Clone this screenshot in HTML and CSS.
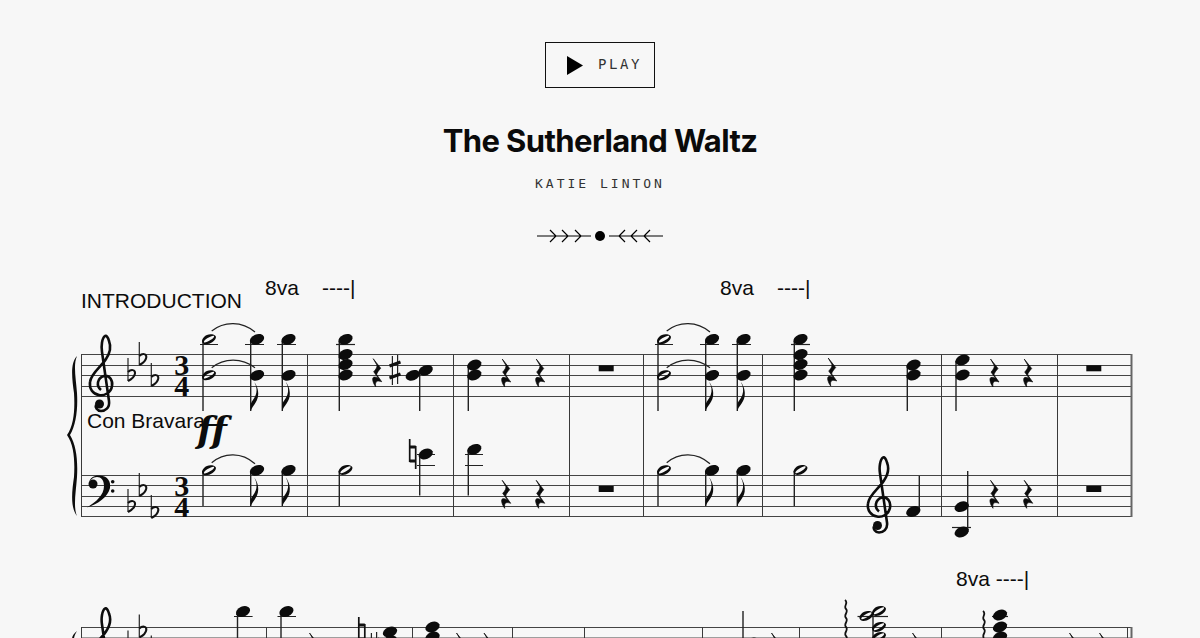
FILE: index.html
```html
<!DOCTYPE html>
<html lang="en">
<head>
    <meta charset="UTF-8">
    <meta name="viewport" content="width=device-width, initial-scale=1.0">
    <title>The Sutherland Waltz</title>
    <link rel="stylesheet" href="styles.css">
</head>
<body>
    <div class="page">
        <button class="play-btn" type="button">
            <svg class="play-icon" width="16" height="19" viewBox="0 0 16 19"><path d="M0 0L16 9.5L0 19Z"/></svg>
            <span>PLAY</span>
        </button>

        <h1 class="title">The Sutherland Waltz</h1>
        <p class="author">KATIE LINTON</p>

        <svg class="ornament" width="126" height="14" viewBox="0 0 126 14">
            <path d="M0 7H54M13 1L19 7L13 13M25 1L31 7L25 13M38 1L44 7L38 13"/>
            <circle cx="63" cy="7" r="5"/>
            <path d="M72 7H126M88 1L82 7L88 13M100 1L94 7L100 13M113 1L107 7L113 13"/>
        </svg>

        <svg class="score" width="1200" height="378" viewBox="0 260 1200 378">
            <defs>
                <ellipse id="head" rx="7.4" ry="5" transform="rotate(-22)"/>
                <path id="half" fill-rule="evenodd" d="M-6.8 2.6C-7.8 -0.4 -3.6 -5 1.6 -5C5.6 -5 7.6 -3.2 6.8 -1.2C5.8 2 1.6 5 -3 5C-5 5 -6.4 3.8 -6.8 2.6ZM-5 3C-4.4 3.8 -1.4 2.6 1.4 0.8C4.2 -1 5.6 -2.6 5 -3.4C4.4 -4.2 1.4 -3 -1.4 -1.2C-4.2 0.6 -5.6 2.2 -5 3Z"/>
                <path id="rest" class="rest-shape" d="M-3.5 -14L4 -4.5C2 -2 0 0 0 2L5 9C1 7.5 -2 8 -1 14C-4 10 -5 5 -3 4.5C-1 4 1 5 2 6L-3 -1C-1 -3 1 -6 0 -8Z"/>
                <path id="flag" d="M0 0C1 -5 8 -9 7.5 -18C7.5 -23 5 -27 3.5 -29C6 -25 6.5 -20 5 -16C3 -11 0 -9 0 -6Z"/>
                <g id="flat">
                    <path class="thin" d="M0 -17V6"/>
                    <path class="bowl" d="M0 -3C3 -6 7.5 -5.5 7 -1.5C6.5 1.5 3 4.5 0 6"/>
                </g>
                <g id="sharp">
                    <path class="thin" d="M-2.6 -14V15M2.6 -15V14"/>
                    <path class="thick" d="M-5.5 -4L5.5 -8M-5.5 8L5.5 4"/>
                </g>
                <g id="natural">
                    <path class="natural-line" d="M-3 -15V8M3 -8V15"/>
                    <path class="thick" d="M-3 -7L3 -7M-3 7L3 7"/>
                </g>
                <g id="treble-clef">
                    <path class="clef-line" d="M101 389C96 385 97 377 104 375C110 374 113 380 112 385C111 392 104 395 99 394C93 393 89 388 90 381C91 372 101 366 106 358C110 352 111 345 109 340C108 336 106 334 105 335C102 337 101 345 102 351L109 400C110 407 105 410 101 410C97 410 95 406 96 404"/>
                    <circle cx="99.5" cy="403" r="4.5"/>
                </g>
                <g id="key-treble">
                    <use href="#flat" x="128" y="374"/>
                    <use href="#flat" x="139.3" y="358"/>
                    <use href="#flat" x="151.3" y="379"/>
                </g>
                <g id="phrase-treble">
                    <path class="ledger" d="M200 343.5H218M245 343.5H264M277 343.5H296"/>
                    <path class="stem" d="M203 340V410M250.7 340V410M282.3 340V410"/>
                    <use href="#half" x="209" y="338.3"/>
                    <use href="#half" x="209" y="374.3"/>
                    <use href="#head" x="257" y="338.3"/>
                    <use href="#head" x="257" y="374.3"/>
                    <use href="#head" x="288.5" y="338.3"/>
                    <use href="#head" x="288.5" y="374.3"/>
                    <use href="#flag" x="250.7" y="410"/>
                    <use href="#flag" x="282.3" y="410"/>
                    <path class="slur" d="M211.7 330C224 320 242 320 255 331"/>
                    <path class="slur" d="M211.7 366.7C224 356.5 242 356.5 255 366.7"/>
                </g>
                <g id="phrase-bass">
                    <path class="stem" d="M203 470V505M250.7 470V505M282.3 470V505"/>
                    <use href="#half" x="209" y="469.3"/>
                    <use href="#head" x="257" y="469.3"/>
                    <use href="#head" x="288.5" y="469.3"/>
                    <use href="#flag" x="250.7" y="505.5"/>
                    <use href="#flag" x="282.3" y="505.5"/>
                    <path class="slur" d="M211.7 461.7C224 451 242 451 255 462.7"/>
                </g>
                <g id="chord-big">
                    <path class="ledger" d="M336 343.5H355"/>
                    <path class="stem" d="M339.3 340V410"/>
                    <use href="#head" x="345.5" y="338.3"/>
                    <use href="#head" x="345.5" y="353.5"/>
                    <use href="#head" x="345.5" y="363.5"/>
                    <use href="#head" x="345.5" y="374"/>
                </g>
            </defs>

            <!-- staves, system 1 -->
            <path class="staff" d="M81 353.5H1132M81 364.5H1132M81 374.5H1132M81 385.5H1132M81 395.5H1132"/>
            <path class="staff" d="M81 474.5H1132M81 484.5H1132M81 495.5H1132M81 505.5H1132M81 515.5H1132"/>
            <path class="bar" d="M81.5 353.5V515.5M307.5 353.5V515.5M453.5 353.5V515.5M569.5 353.5V515.5M643.5 353.5V515.5M762.5 353.5V515.5M941.5 353.5V515.5M1057.5 353.5V515.5"/>
            <path class="bar-end" d="M1131.5 353V516"/>
            <path d="M77 355C70 362 72 378 74 392C75 408 74 424 67 434C74 444 75 460 74 476C72 490 70 506 77 515C73 506 76 490 77 476C78 458 76 444 70 434C76 424 78 408 77 392C76 378 73 364 77 355Z"/>

            <text class="label" x="81" y="307">INTRODUCTION</text>
            <text class="label" x="265" y="294">8va</text>
            <text class="label" x="322" y="294">----|</text>
            <text class="label" x="720" y="294">8va</text>
            <text class="label" x="777" y="294">----|</text>
            <text class="label" x="87" y="427">Con Bravara</text>
            <text class="dynamic" x="197" y="441">ff</text>

            <use href="#treble-clef"/>
            <use href="#key-treble"/>
            <text class="time" x="181.7" y="374">3</text>
            <text class="time" x="181.7" y="395">4</text>

            <path d="M89 482C90 476 95 474 100 474.5C108 475 111 481 110 487C108 496 98 503 87 506.5C96 501 104 494 104 485C104 479 101 476 97 476C93 476 90 479 89 482Z"/>
            <circle cx="93" cy="483" r="4.5"/>
            <circle cx="112.7" cy="480.7" r="1.8"/>
            <circle cx="112.7" cy="490" r="1.8"/>
            <use href="#flat" x="128" y="505"/>
            <use href="#flat" x="139.3" y="489"/>
            <use href="#flat" x="151.3" y="511"/>
            <text class="time" x="181.7" y="495">3</text>
            <text class="time" x="181.7" y="516">4</text>

            <!-- measures 1-4 -->
            <use href="#phrase-treble"/>
            <use href="#phrase-bass"/>
            <use href="#chord-big"/>
            <use href="#rest" x="376.7" y="371.7"/>
            <use href="#sharp" x="395" y="369"/>
            <path class="stem" d="M419.7 370V410"/>
            <use href="#head" x="412.7" y="374.3"/>
            <use href="#head" x="425.7" y="369.3"/>
            <path class="stem" d="M468.3 365V410"/>
            <use href="#head" x="474.3" y="364"/>
            <use href="#head" x="474.3" y="374"/>
            <use href="#rest" x="505.7" y="372"/>
            <use href="#rest" x="539.7" y="372"/>
            <rect x="598.7" y="364.3" width="15" height="6"/>

            <path class="stem" d="M339.3 470V505"/>
            <use href="#half" x="345.5" y="469"/>
            <use href="#natural" x="412.7" y="453"/>
            <path class="ledger" d="M417 453.5H435M417 464.5H435M465 453.5H483M465 464.5H483"/>
            <path class="stem" d="M419.7 454V494.5M468.3 449V494.5"/>
            <use href="#head" x="425.7" y="453"/>
            <use href="#head" x="474.3" y="448.3"/>
            <use href="#rest" x="505.7" y="493.3"/>
            <use href="#rest" x="539.7" y="493.3"/>
            <rect x="598.7" y="485" width="15" height="6"/>

            <!-- measures 5-8 -->
            <use href="#phrase-treble" x="455"/>
            <use href="#phrase-bass" x="455"/>
            <use href="#chord-big" x="455"/>
            <use href="#rest" x="831.7" y="371"/>
            <path class="stem" d="M907.3 365V410M956 360V410"/>
            <use href="#head" x="913.5" y="364"/>
            <use href="#head" x="913.5" y="374"/>
            <use href="#head" x="962.5" y="359"/>
            <use href="#head" x="962.5" y="374"/>
            <use href="#rest" x="994" y="372"/>
            <use href="#rest" x="1027.7" y="372"/>
            <rect x="1086.3" y="364.3" width="15" height="6"/>

            <path class="stem" d="M794.3 470V505"/>
            <use href="#half" x="800.5" y="469"/>
            <use href="#treble-clef" x="778" y="121.5"/>
            <path class="stem" d="M919.3 475V510M967.7 470V531"/>
            <use href="#head" x="913.3" y="510.5"/>
            <path class="ledger" d="M952 526.5H971"/>
            <use href="#head" x="961.7" y="505.7"/>
            <use href="#head" x="961.7" y="531"/>
            <use href="#rest" x="994" y="493.3"/>
            <use href="#rest" x="1027.7" y="493.3"/>
            <rect x="1086.3" y="485" width="15" height="6"/>

            <!-- system 2, cut off by the window -->
            <text class="label" x="956" y="584.5">8va ----|</text>
            <path class="staff" d="M81 626.5H1132M81 637H1132"/>
            <path class="bar" d="M81.5 626V638M266.5 626V638M412.5 626V638M512.5 626V638M584.5 626V638M702.5 626V638M799.5 626V638M941.5 626V638M1127.5 626V638"/>
            <path class="bar-end" d="M1131.5 626V638"/>
            <path d="M77 630C73 633 72 636 72 638H74C74 636 75 633 77 630Z"/>
            <use href="#treble-clef" y="272.5"/>
            <use href="#key-treble" y="272.5"/>

            <path class="ledger" d="M234 615.5H252.6M277.5 615.5H296"/>
            <path class="stem" d="M237.5 612V638M281 612V638M743 610V638"/>
            <use href="#head" x="243" y="610.5"/>
            <use href="#head" x="286.4" y="610.5"/>
            <use href="#rest" x="313" y="646"/>
            <use href="#natural" x="361.8" y="631"/>
            <use href="#sharp" x="374" y="646"/>
            <use href="#head" x="390" y="631"/>
            <use href="#head" x="390" y="640"/>
            <use href="#head" x="432.5" y="626"/>
            <use href="#head" x="432.5" y="636"/>
            <use href="#rest" x="460" y="646"/>
            <use href="#rest" x="487.5" y="646"/>
            <rect x="541" y="637" width="15" height="2"/>
            <use href="#rest" x="722" y="652"/>
            <use href="#head" x="752" y="642"/>
            <use href="#rest" x="775" y="646"/>

            <path class="wiggle" d="M845 599C849 602 843 605 846 608C849 611 843 614 846 617C849 620 843 623 846 626C849 629 843 632 846 635C848 637 846 638 846 639"/>
            <path class="ledger" d="M857.5 615.5H888"/>
            <path class="stem" d="M873 612V638"/>
            <use href="#half" x="866.4" y="615"/>
            <use href="#half" x="879" y="610"/>
            <use href="#half" x="879" y="626"/>
            <use href="#half" x="879" y="636"/>
            <use href="#rest" x="916" y="646"/>

            <path class="wiggle" d="M983 610C987 613 981 616 984 619C987 622 981 625 984 628C987 631 981 634 984 637"/>
            <path class="ledger" d="M992 615.5H1008"/>
            <use href="#head" x="1000" y="614"/>
            <use href="#head" x="1000" y="626"/>
            <use href="#head" x="1000" y="636"/>
            <use href="#rest" x="1073" y="646"/>
            <use href="#rest" x="1103" y="646"/>
        </svg>
    </div>
</body>
</html>
```

FILE: styles.css
```css
html, body {
    margin: 0;
    height: 100%;
    overflow: hidden;
}
body {
    background-color: #f7f7f7;
    color: #111;
}
.page {
    display: flex;
    flex-direction: column;
    align-items: center;
    padding-top: 42px;
}
.play-btn {
    display: flex;
    align-items: center;
    gap: 15px;
    width: 110px;
    height: 46px;
    padding: 0 0 0 21px;
    background: transparent;
    border: 1px solid #111;
    font-family: "DejaVu Sans Mono", monospace;
    font-size: 14px;
    line-height: 16px;
    letter-spacing: 2.6px;
    color: #333;
}
.play-btn span {
    margin-bottom: 2px;
}
.play-icon {
    fill: #000;
}
.title {
    margin: 35px 0 0;
    font-family: Inter, Roboto, sans-serif;
    font-size: 31px;
    line-height: 36px;
    font-weight: 700;
    letter-spacing: -0.6px;
    color: #0a0a0a;
}
.author {
    margin: 18px 0 0;
    font-family: "DejaVu Sans Mono", monospace;
    font-size: 13px;
    line-height: 14px;
    letter-spacing: 3px;
    color: #333;
}
.ornament {
    margin-top: 38px;
    display: block;
}
.ornament path {
    fill: none;
    stroke: #000;
    stroke-width: 1.2;
}
.ornament circle {
    fill: #000;
}
.score {
    display: block;
    margin-top: 18px;
    flex-shrink: 0;
    fill: #0c0c0c;
}
.staff {
    fill: none;
    stroke: #444;
    stroke-width: 1;
}
.bar {
    fill: none;
    stroke: #3a3a3a;
    stroke-width: 1;
}
.bar-end {
    fill: none;
    stroke: #666;
    stroke-width: 2;
}
.stem,
.ledger,
.thin {
    fill: none;
    stroke: #222;
    stroke-width: 1.2;
}
.stem {
    stroke-width: 1.4;
}
.natural-line {
    fill: none;
    stroke: #111;
    stroke-width: 1.7;
}
.thick {
    fill: none;
    stroke: #111;
    stroke-width: 3;
}
.bowl {
    fill: none;
    stroke: #111;
    stroke-width: 2;
}
.slur {
    fill: none;
    stroke: #222;
    stroke-width: 1.2;
}
.wiggle {
    fill: none;
    stroke: #111;
    stroke-width: 1.8;
}
.rest-shape {
    stroke: #0c0c0c;
    stroke-width: 0.7;
}
.clef-line {
    fill: none;
    stroke: #0c0c0c;
    stroke-width: 2.6;
}
.label {
    font-family: "Liberation Sans", Arial, sans-serif;
    font-size: 21px;
}
.dynamic {
    font-family: "DejaVu Serif", serif;
    font-weight: 700;
    font-style: italic;
    font-size: 36px;
}
.time {
    font-family: "Liberation Serif", serif;
    font-weight: 700;
    font-size: 30px;
    text-anchor: middle;
}
```
